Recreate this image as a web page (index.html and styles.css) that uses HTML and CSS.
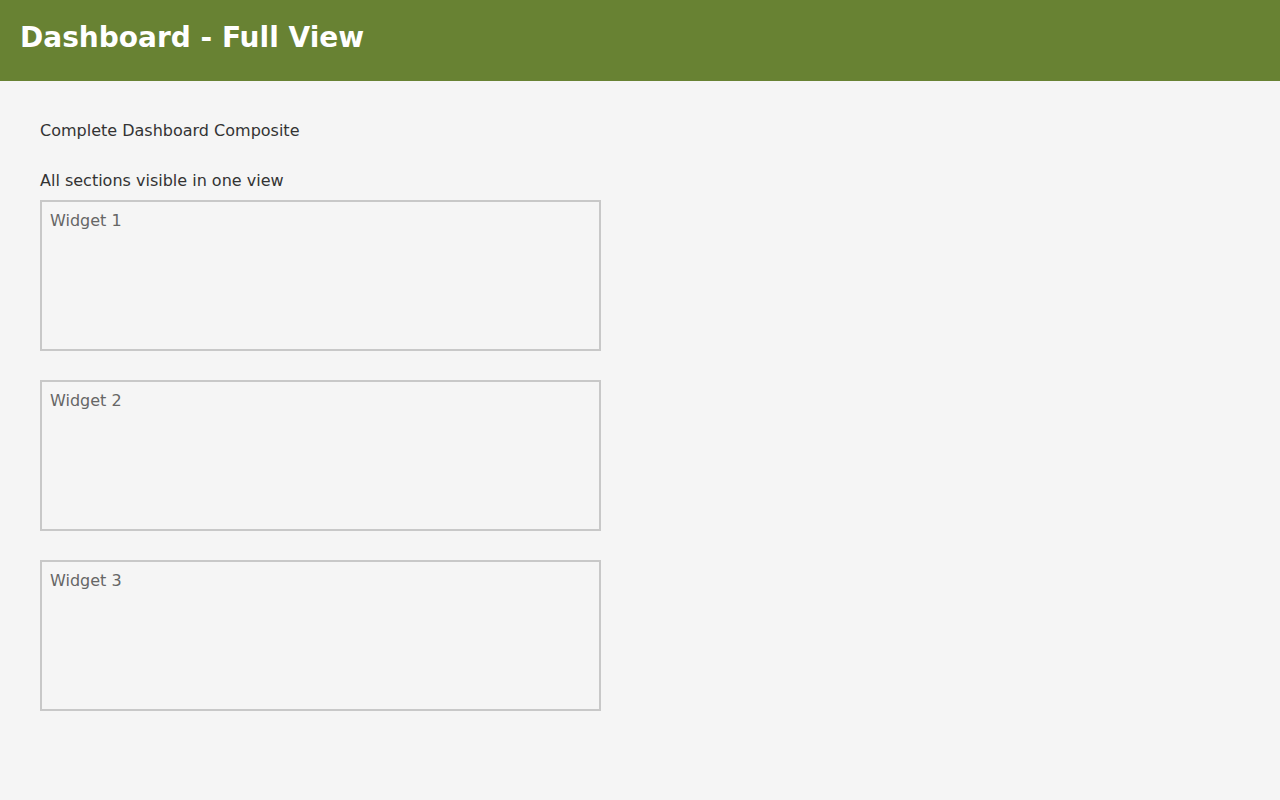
FILE: index.html
```html
<!DOCTYPE html>
<html>
<head>
<meta charset="utf-8">
<link rel="stylesheet" href="styles.css">
</head>
<body>
<header class="top">
  <h1 class="title">Dashboard - Full View</h1>
</header>
<main class="content">
  <p class="line first">Complete Dashboard Composite</p>
  <p class="line second">All sections visible in one view</p>
  <div class="widgets">
    <div class="widget">Widget 1</div>
    <div class="widget">Widget 2</div>
    <div class="widget">Widget 3</div>
  </div>
</main>
</body>
</html>
```
FILE: styles.css
```css
html, body {
  margin: 0;
  padding: 0;
}
body {
  background: #f5f5f5;
  font-family: "DejaVu Sans", sans-serif;
  color: #333;
}
.top {
  background: #688233;
  height: 81px;
  display: flex;
  align-items: center;
  padding: 0 20px;
  box-sizing: border-box;
}
.title {
  margin: 0;
  color: #fff;
  font-size: 28px;
  font-weight: bold;
  line-height: 1;
  padding-bottom: 5px;
}
.content {
  padding: 40px 40px 0;
}
.line {
  margin: 0;
  font-size: 16px;
  line-height: 20px;
}
.first {
  margin-bottom: 30px;
}
.second {
  margin-bottom: 9px;
}
.widgets {
  display: flex;
  flex-direction: column;
  gap: 29px;
}
.widget {
  width: 561px;
  height: 151px;
  box-sizing: border-box;
  border: 2px solid #c8c8c8;
  padding: 9px 8px 8px;
  font-size: 16px;
  line-height: 20px;
  color: #666;
}
```
